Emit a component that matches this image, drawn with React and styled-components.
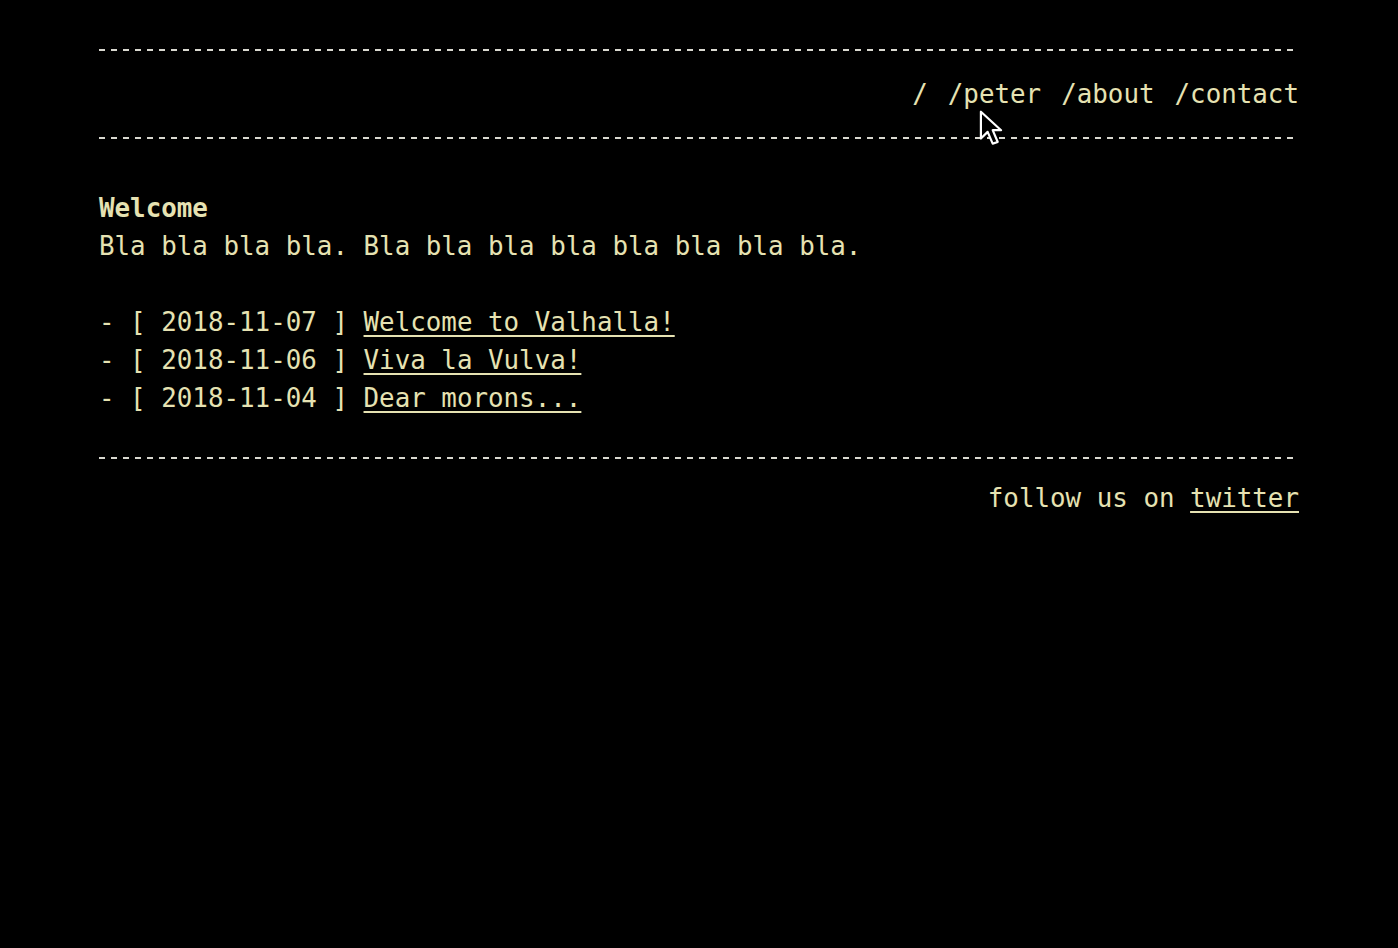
import React from "react";
import styled, { createGlobalStyle } from "styled-components";

const GlobalStyle = createGlobalStyle`
  html, body {
    margin: 0;
    padding: 0;
    background: #000;
  }
  body {
    color: #e6e2b2;
    font-family: "DejaVu Sans Mono", "Liberation Mono", monospace;
    font-size: 25.85px;
    line-height: 38px;
  }
`;

const posts = [
  { date: "2018-11-07", title: "Welcome to Valhalla!" },
  { date: "2018-11-06", title: "Viva la Vulva!" },
  { date: "2018-11-04", title: "Dear morons..." },
];

function App() {
  return (
    <>
      <GlobalStyle />
      <Page>
        <Rule />
        <Nav>
          <NavLink href="#">/</NavLink>
          <NavLink href="#">/peter</NavLink>
          <NavLink href="#">/about</NavLink>
          <NavLink href="#">/contact</NavLink>
        </Nav>
        <Rule />
        <Main>
          <Title>Welcome</Title>
          <Intro>Bla bla bla bla. Bla bla bla bla bla bla bla bla.</Intro>
          <PostList>
            {posts.map((p) => (
              <Post key={p.date}>
                - [ {p.date} ] <PostLink href="#">{p.title}</PostLink>
              </Post>
            ))}
          </PostList>
        </Main>
        <Rule />
        <Footer>
          follow us on <PostLink href="#">twitter</PostLink>
        </Footer>
        <Cursor viewBox="0 0 14 22" width="24" height="37">
          <path
            d="M1 1 L1 17 L5 13 L8 20 L11 19 L8 12 L13 12 Z"
            fill="#000"
            stroke="#fff"
            strokeWidth="1.3"
            strokeLinejoin="round"
          />
        </Cursor>
      </Page>
    </>
  );
}

export default App;

const Page = styled.div`
  position: relative;
  width: 1200px;
  margin: 0 auto;
  padding-top: 49px;
`;

const Rule = styled.div`
  height: 2px;
  background: repeating-linear-gradient(
    to right,
    #d9d8d0 0px,
    #d9d8d0 6px,
    transparent 6px,
    transparent 12px
  );
`;

const Nav = styled.nav`
  display: flex;
  justify-content: flex-end;
  gap: 20px;
  padding: 24px 0 24px;
`;

const NavLink = styled.a`
  color: inherit;
  text-decoration: none;
`;

const Main = styled.main`
  padding: 50px 0 40px;
`;

const Title = styled.div`
  font-weight: bold;
`;

const Intro = styled.p`
  margin: 0 0 38px;
`;

const PostList = styled.div`
  display: flex;
  flex-direction: column;
`;

const Post = styled.div`
  white-space: pre;
`;

const PostLink = styled.a`
  color: inherit;
  text-decoration: underline;
  text-underline-offset: 4px;
  text-decoration-thickness: 2px;
`;

const Footer = styled.footer`
  text-align: right;
  padding-top: 20px;
`;

const Cursor = styled.svg`
  position: absolute;
  left: 880px;
  top: 110px;
`;
